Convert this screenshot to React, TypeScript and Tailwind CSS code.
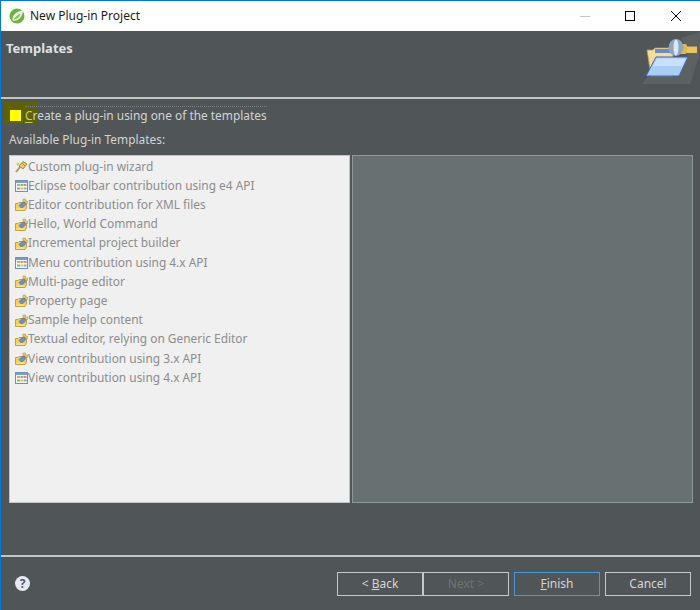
import type { ReactNode } from "react";

const TEMPLATES = [
  { label: "Custom plug-in wizard", icon: "wand" },
  { label: "Eclipse toolbar contribution using e4 API", icon: "table" },
  { label: "Editor contribution for XML files", icon: "plug" },
  { label: "Hello, World Command", icon: "plug" },
  { label: "Incremental project builder", icon: "plug" },
  { label: "Menu contribution using 4.x API", icon: "table" },
  { label: "Multi-page editor", icon: "plug" },
  { label: "Property page", icon: "plug" },
  { label: "Sample help content", icon: "plug" },
  { label: "Textual editor, relying on Generic Editor", icon: "plug" },
  { label: "View contribution using 3.x API", icon: "plug" },
  { label: "View contribution using 4.x API", icon: "table" },
];

const SpringLogo = () => (
  <svg width="16" height="16" viewBox="0 0 16 16">
    <circle cx="8" cy="8" r="7.5" fill="#6db33f" />
    <path d="M3.5 12.5C2.5 7 8 3 14 2.5C13.5 9 9 14 3.5 12.5Z" fill="#e9f5df" />
    <path d="M4.5 11.5C6.5 8.5 9 7 11.5 5.5C10.5 9 7.5 11.5 4.5 11.5Z" fill="#7dbd50" />
  </svg>
);

const WandIcon = () => (
  <svg width="13" height="13" viewBox="0 0 13 13">
    <path d="M1 12L5 7" stroke="#a39a68" strokeWidth="2" />
    <path d="M4 6L8 1.5L12 4L8 9Z" fill="#e4cc6e" stroke="#9d8a45" />
    <path d="M7 3L10 6" stroke="#8f8f70" strokeWidth="1" />
    <circle cx="3" cy="4" r="1.5" fill="#ddc66a" />
  </svg>
);

const TableIcon = () => (
  <svg width="13" height="12" viewBox="0 0 13 12">
    <rect x="0.5" y="0.5" width="12" height="11" fill="#f2f6fb" stroke="#6f8fbd" />
    <rect x="1" y="1" width="11" height="2" fill="#7c9ccb" />
    <rect x="2" y="4" width="3" height="2" fill="#e5a850" />
    <rect x="5.5" y="4" width="3" height="2" fill="#86bb70" />
    <rect x="9" y="4" width="2.5" height="2" fill="#dc8a78" />
    <rect x="2" y="7.5" width="3" height="2" fill="#86bb70" />
    <rect x="5.5" y="7.5" width="3" height="2" fill="#e5c050" />
    <rect x="9" y="7.5" width="2.5" height="2" fill="#88a8d8" />
  </svg>
);

const PlugIcon = () => (
  <svg width="13" height="13" viewBox="0 0 13 13">
    <path d="M0.5 5.5H3L4 4.5H11.5V10L10 12.5H0.5Z" fill="#f5d15a" stroke="#ad8f34" strokeWidth="0.8" />
    <path d="M8 1H10.5V3H12.5V5.5H10V4H8Z" fill="#f0c850" stroke="#ad8f34" strokeWidth="0.5" />
    <path d="M4 7.5L7 4.5H10L10.5 7L8 9.5H5.5Z" fill="#6f8fc6" stroke="#4f6ba3" strokeWidth="0.5" />
    <path d="M1.5 10.5H9.5V12H1.5Z" fill="#f9e391" />
  </svg>
);

const FolderBanner = () => (
  <svg width="59" height="55" viewBox="640 31 59 55" className="shrink-0">
    <path d="M680 38L699 32V53L689 84H641L647 76H678L686 57V48Z" fill="#747878" opacity="0.35" />
    <path d="M646 50H652L654 48H672V76H650Z" fill="#f3dc9c" stroke="#b09a62" strokeWidth="0.8" />
    <rect x="654" y="49" width="16" height="4" fill="#6b8cc0" />
    <path d="M686 46.5H696V53H686Z" fill="#e7c565" />
    <rect x="678" y="44" width="8" height="10" rx="2" fill="#e0b850" />
    <ellipse cx="675" cy="47.5" rx="7.5" ry="8.5" fill="#8ca6c0" />
    <ellipse cx="675" cy="47.5" rx="2.5" ry="8" fill="#dce6f0" />
    <path d="M655 57H687L678 76H645Z" fill="#a9cdf3" stroke="#4064b8" />
    <path d="M656 58.5H685L681 66H652Z" fill="#c9e0f9" />
  </svg>
);

const WizardButton = ({
  children,
  muted = false,
  focused = false,
}: {
  children: ReactNode;
  muted?: boolean;
  focused?: boolean;
}) => (
  <button
    type="button"
    className={`h-6 w-[86px] border text-[12px] leading-none ${focused ? "border-[#4a96d6]" : "border-[#c6c8c8]"} ${muted ? "text-[#6f7373]" : "text-[#d4d6d6]"}`}
  >
    {children}
  </button>
);

const App = () => {
  return (
    <div className="flex h-[610px] w-[700px] flex-col overflow-hidden border-l border-l-[#0078d7] bg-[#505557] font-['Noto_Sans','Liberation_Sans',sans-serif] text-[11.9px] text-[#d2d4d4]">
      <div className="flex h-[31px] shrink-0 items-center border-t border-t-[#0078d7] bg-white pl-[8px] text-[12px] text-[#1b1b1b]">
        <SpringLogo />
        <span className="ml-[5px]">New Plug-in Project</span>
        <div className="ml-auto flex items-center pr-[19px]">
          <div className="h-px w-[10px] bg-[#c4c4c4]" />
          <div className="ml-[35px] h-[10px] w-[10px] border border-black" />
          <svg width="10" height="10" viewBox="0 0 10 10" className="ml-[36px]">
            <path d="M0 0L10 10M10 0L0 10" stroke="#000" strokeWidth="1" />
          </svg>
        </div>
      </div>

      <div className="flex h-[66px] shrink-0 justify-between pl-[5px]">
        <span className="pt-[9px] text-[13px] font-bold leading-4 text-[#dfe1e1]">Templates</span>
        <FolderBanner />
      </div>
      <div className="h-0.5 shrink-0 bg-[#c2c4c4]" />

      <div className="flex flex-col pb-[52px] pl-2 pr-[6px] pt-[8px]">
        <label className="flex h-[17px] items-center">
          <span className="relative mr-[4px] ml-[1px] h-[11px] w-[11px]">
            <span className="absolute -left-[6px] -top-[8px] h-[21px] w-[34px] bg-[#5f6108]" />
            <span className="absolute inset-0 bg-[#ffff00]" />
          </span>
          <span className="relative">
            <span className="absolute inset-x-0 -top-px border-t border-dotted border-[#7b7f80]" />
            <span className="text-[#d0d060] underline decoration-[#c8c850] underline-offset-2">C</span>reate a plug-in using one of the templates
          </span>
        </label>
        <div className="mt-[7px] h-[17px] leading-[17px]">Available Plug-in Templates:</div>

        <div className="mt-[7px] flex h-[348px] gap-[2px]">
          <ul className="w-[341px] border border-[#c3c7c7] bg-[#f0f0f0] pl-[5px] pt-[1px] text-[#8c8c8c]">
            {TEMPLATES.map((t) => (
              <li key={t.label} className="flex h-[19.2px] items-center">
                <span className="flex w-[13px] shrink-0 justify-center">
                  {t.icon === "wand" && <WandIcon />}
                  {t.icon === "table" && <TableIcon />}
                  {t.icon === "plug" && <PlugIcon />}
                </span>
                {t.label}
              </li>
            ))}
          </ul>
          <div className="w-[341px] border border-[#8e9a9a] bg-[#687172]" />
        </div>
      </div>

      <div className="h-0.5 shrink-0 bg-[#c2c4c4]" />
      <div className="flex flex-1 items-center pl-[14px] pr-[9px]">
        <span className="flex h-[15px] w-[15px] items-center justify-center rounded-full bg-[#e8eaee] text-[12px] font-bold leading-none text-[#4a5a78]">?</span>
        <div className="ml-auto flex">
          <WizardButton>
            &lt; <span className="underline">B</span>ack
          </WizardButton>
          <WizardButton muted>Next &gt;</WizardButton>
          <div className="mx-[5px]">
            <WizardButton focused>
              <span className="underline">F</span>inish
            </WizardButton>
          </div>
          <WizardButton>Cancel</WizardButton>
        </div>
      </div>
    </div>
  );
};

export default App;
